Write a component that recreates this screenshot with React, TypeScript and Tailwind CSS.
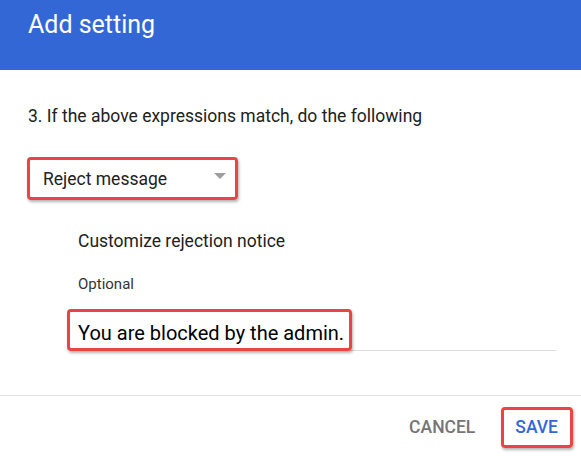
export default function App() {
  return (
    <div className="w-[581px] h-[457px] bg-white flex flex-col overflow-hidden font-['Roboto',sans-serif] text-[#212121]">
      {/* header */}
      <div className="h-[70px] shrink-0 bg-[#3367d6] px-[28px] pt-[10px]">
        <h1 className="text-[25px] leading-[29px] text-white">Add setting</h1>
      </div>

      {/* body */}
      <div className="flex-1 px-[27px]">
        <p className="mt-[36px] pl-px text-[17.5px] leading-[21px]">
          3. If the above expressions match, do the following
        </p>

        <div className="mt-[30px] w-[211px] h-[43px] border-[3px] border-[#e94545] rounded-[4px] shadow-[1px_2px_3px_rgba(0,0,0,0.3)] pl-[13px] pr-[9px] pt-[9px] flex justify-between items-start">
          <span className="text-[17.5px] leading-[21px]">Reject message</span>
          <span className="mt-[4px] w-0 h-0 border-x-[6px] border-x-transparent border-t-[6px] border-t-[#9e9e9e]" />
        </div>

        <div className="ml-[51px]">
          <p className="mt-[31px] text-[17.5px] leading-[21px]">Customize rejection notice</p>
          <p className="mt-[23px] text-[15px] leading-[18px] text-[#333]">Optional</p>
          <div className="mt-[28px] w-[478px] pb-[3px] border-b border-[#dcdcdc]">
            <div className="relative inline-block">
              <span className="text-[20px] leading-[24px] text-black">You are blocked by the admin.</span>
              <div className="absolute left-[-11px] top-[-12px] w-[285px] h-[42px] border-[3px] border-[#e94545] rounded-[4px] shadow-[1px_2px_3px_rgba(0,0,0,0.3)]" />
            </div>
          </div>
        </div>
      </div>

      {/* footer */}
      <div className="h-[62px] shrink-0 border-t border-[#e0e0e0] flex justify-end items-start pt-[11px] pr-[8px] gap-[26px]">
        <button className="mt-[10px] text-[17.5px] leading-[21px] font-medium text-[#757575]">CANCEL</button>
        <button className="border-[3px] border-[#e94545] rounded-[4px] shadow-[1px_2px_3px_rgba(0,0,0,0.3)] pl-[11px] pr-[12px] py-[7px] text-[17.5px] leading-[21px] font-medium text-[#3367d6]">
          SAVE
        </button>
      </div>
    </div>
  )
}
